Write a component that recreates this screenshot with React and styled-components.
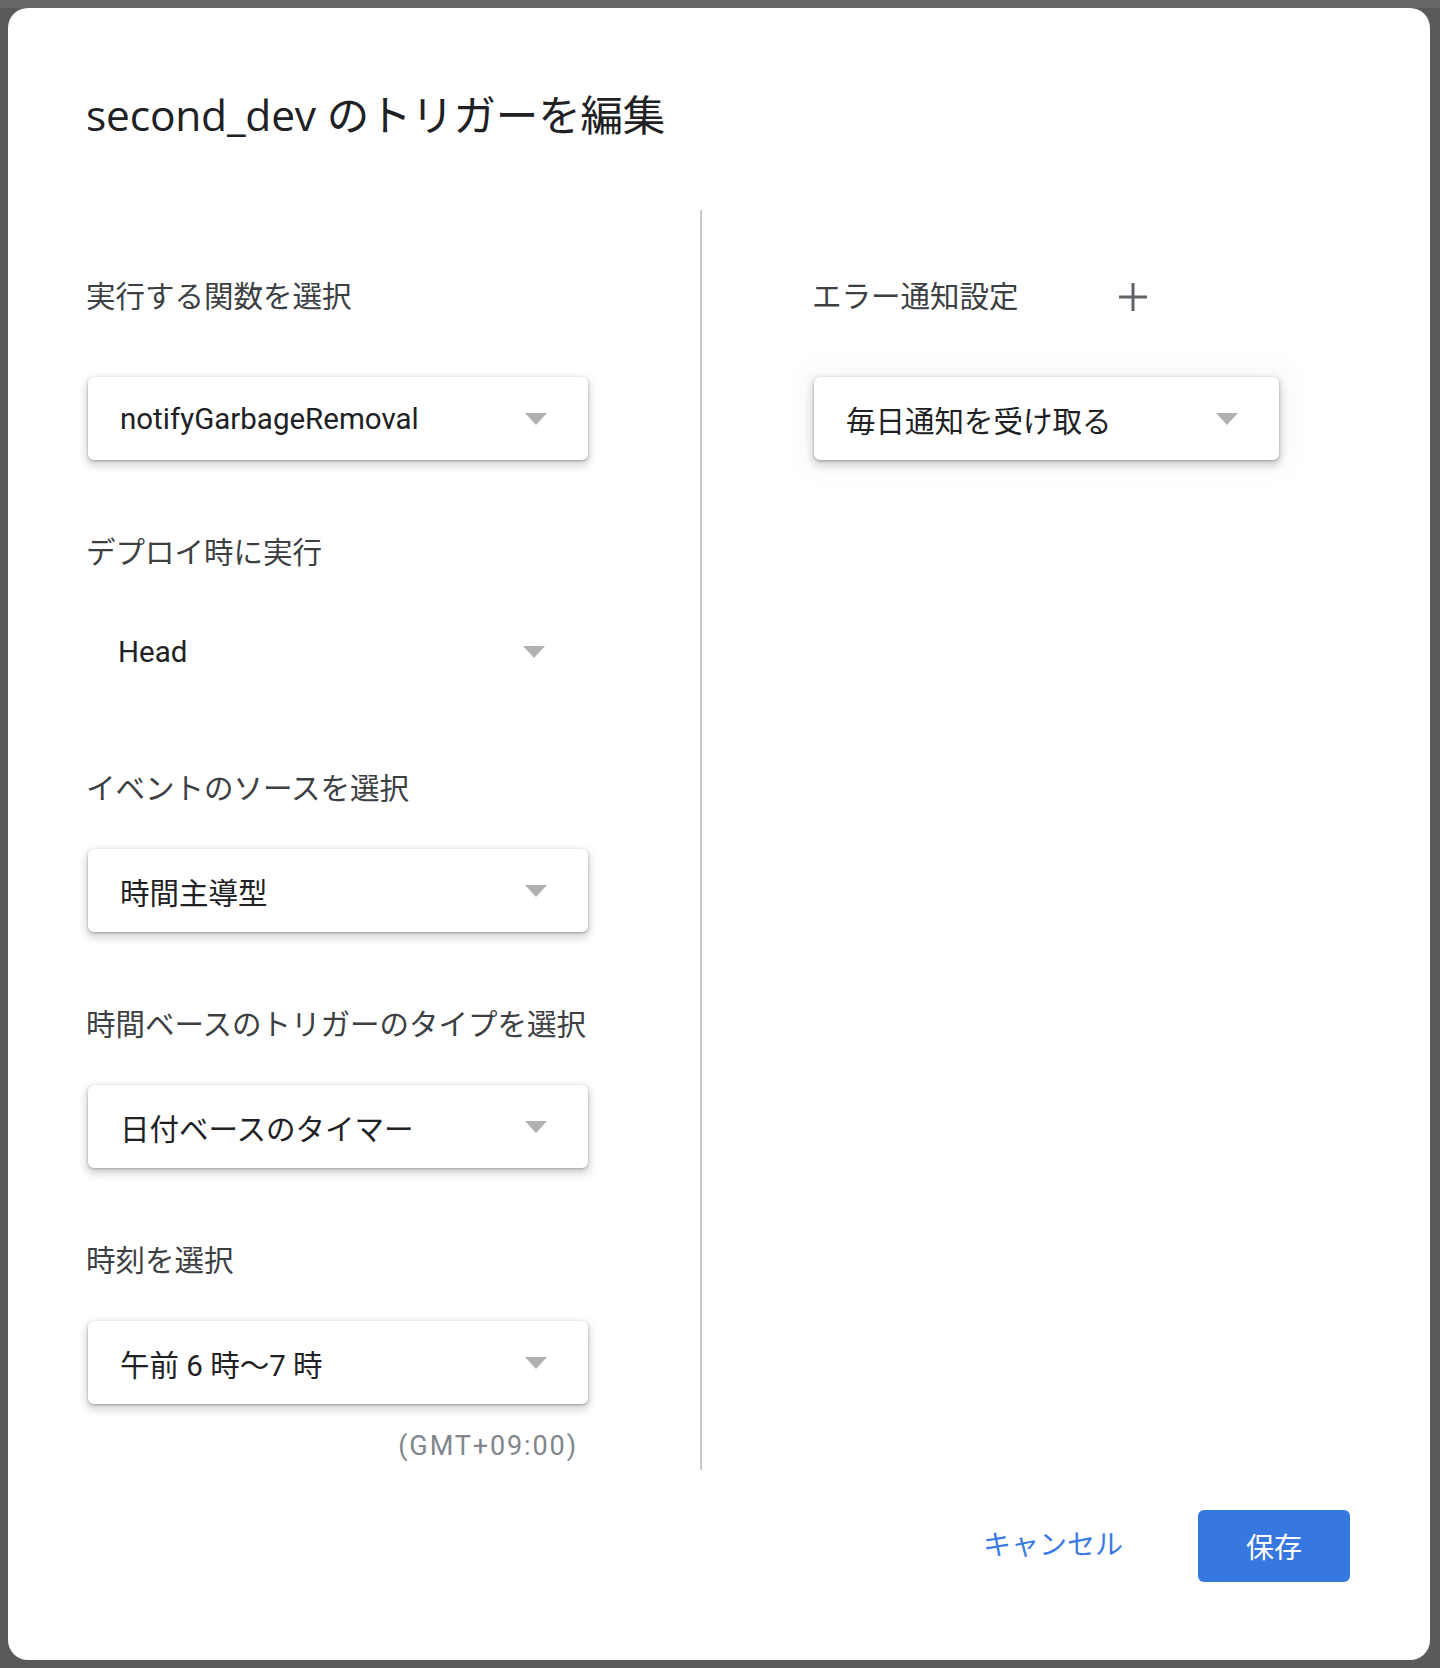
import React from "react";
import styled, { createGlobalStyle } from "styled-components";

/* ---------------- GLOBAL ---------------- */

const GlobalStyle = createGlobalStyle`
  html, body {
    margin: 0;
    padding: 0;
    background: #5a5a5a;
  }
  body {
    font-family: Roboto, "Noto Sans CJK JP", sans-serif;
    -webkit-font-smoothing: antialiased;
  }
  * { box-sizing: border-box; }
`;

const JP = `Roboto, "Noto Sans CJK JP", sans-serif`;

/* ---------------- LAYOUT ---------------- */

const Backdrop = styled.div`
  min-height: 1668px;
  padding: 8px 10px 8px 8px;
  background: linear-gradient(to bottom, #676767 0, #676767 8px, #5a5a5a 8px);
`;

const Dialog = styled.div`
  width: 1422px;
  height: 1652px;
  background: #fff;
  border-radius: 20px;
  padding: 79px 80px 78px 78px;
  display: flex;
  flex-direction: column;
`;

const Title = styled.h1`
  margin: 0;
  height: 56px;
  line-height: 56px;
  font-family: "Open Sans", "Noto Sans CJK JP", sans-serif;
  font-size: 42.5px;
  font-weight: 400;
  color: #202124;
  letter-spacing: -0.2px;

  b {
    font-weight: 500;
  }
`;

const Columns = styled.div`
  margin-top: 67px;
  display: grid;
  grid-template-columns: 614px 2px 1fr;
`;

const LeftCol = styled.div`
  padding: 67px 0 6px 0;
  display: flex;
  flex-direction: column;
`;

const RightCol = styled.div`
  padding: 67px 0 0 110px;
  display: flex;
  flex-direction: column;
`;

const Divider = styled.div`
  background: #c6c9cc;
`;

/* ---------------- FIELDS ---------------- */

const Field = styled.div`
  display: flex;
  flex-direction: column;
  & + & {
    margin-top: 73px;
  }
`;

const LabelRow = styled.div`
  display: flex;
  align-items: center;
  height: 40px;
`;

const Label = styled.div`
  font-family: ${JP};
  font-size: 29.5px;
  line-height: 40px;
  color: #3c4043;
  white-space: nowrap;
`;

const PlusButton = styled.span`
  margin-left: 99px;
  width: 30px;
  height: 30px;
  display: grid;
  place-items: center;
  color: #5f6368;
`;

const Select = styled.div`
  margin-top: ${p => (p.$first ? 60 : p.$flat ? 34 : 40)}px;
  margin-left: ${p => (p.$flat ? "0" : "2px")};
  width: ${p => p.$width || 500}px;
  height: ${p => (p.$flat ? 89 : 83)}px;
  padding: 0 41px 0 32px;
  display: flex;
  align-items: center;
  justify-content: space-between;
  border-radius: 6px;
  background: #fff;
  box-shadow: ${p =>
    p.$flat
      ? "none"
      : p.$hover
      ? "0 1px 3px rgba(0,0,0,0.28), 0 4px 9px 2px rgba(0,0,0,0.16), 0 0 26px 14px rgba(0,0,0,0.025)"
      : "0 1px 3px rgba(0,0,0,0.28), 0 4px 9px 2px rgba(0,0,0,0.16)"};
`;

const SelectText = styled.span`
  font-family: ${JP};
  font-size: 29.5px;
  color: #202124;
  white-space: nowrap;
`;

const Caret = styled.span`
  width: 0;
  height: 0;
  border-left: 11px solid transparent;
  border-right: 11px solid transparent;
  border-top: 12px solid #b1b1b1;
`;

const Hint = styled.div`
  margin-top: 24px;
  width: 502px;
  height: 36px;
  line-height: 36px;
  text-align: right;
  padding-right: 10px;
  font-family: Roboto, sans-serif;
  font-size: 27px;
  letter-spacing: 1.9px;
  color: #80868b;
`;

/* ---------------- FOOTER ---------------- */

const Footer = styled.div`
  margin-top: 40px;
  display: flex;
  justify-content: flex-end;
  align-items: center;
  gap: 75px;
`;

const TextButton = styled.button`
  border: none;
  background: none;
  padding: 0;
  font-family: ${JP};
  font-size: 28px;
  line-height: 40px;
  color: #3a7be2;
  cursor: pointer;
`;

const PrimaryButton = styled.button`
  width: 152px;
  height: 72px;
  border: none;
  border-radius: 6px;
  background: #3777e0;
  color: #fff;
  font-family: ${JP};
  font-size: 28px;
  cursor: pointer;
`;

/* ---------------- DATA ---------------- */

const fields = [
  { label: "実行する関数を選択", value: "notifyGarbageRemoval" },
  { label: "デプロイ時に実行", value: "Head", flat: true },
  { label: "イベントのソースを選択", value: "時間主導型" },
  { label: "時間ベースのトリガーのタイプを選択", value: "日付ベースのタイマー" },
  { label: "時刻を選択", value: "午前 6 時〜7 時", hint: "(GMT+09:00)" }
];

const Plus = () => (
  <svg width="30" height="30" viewBox="0 0 30 30" fill="none">
    <path d="M15 1v28M1 15h28" stroke="currentColor" strokeWidth="3" />
  </svg>
);

/* ---------------- COMPONENT ---------------- */

const App = () => (
  <>
    <GlobalStyle />
    <Backdrop>
      <Dialog>
        <Title>
          <b>second_dev</b> のトリガーを編集
        </Title>

        <Columns>
          <LeftCol>
            {fields.map((f, i) => (
              <Field key={f.label}>
                <LabelRow>
                  <Label>{f.label}</Label>
                </LabelRow>
                <Select $flat={f.flat} $first={i === 0}>
                  <SelectText>{f.value}</SelectText>
                  <Caret />
                </Select>
                {f.hint && <Hint>{f.hint}</Hint>}
              </Field>
            ))}
          </LeftCol>

          <Divider />

          <RightCol>
            <Field>
              <LabelRow>
                <Label>エラー通知設定</Label>
                <PlusButton>
                  <Plus />
                </PlusButton>
              </LabelRow>
              <Select $width={465} $hover $first>
                <SelectText>毎日通知を受け取る</SelectText>
                <Caret />
              </Select>
            </Field>
          </RightCol>
        </Columns>

        <Footer>
          <TextButton>キャンセル</TextButton>
          <PrimaryButton>保存</PrimaryButton>
        </Footer>
      </Dialog>
    </Backdrop>
  </>
);

export default App;
